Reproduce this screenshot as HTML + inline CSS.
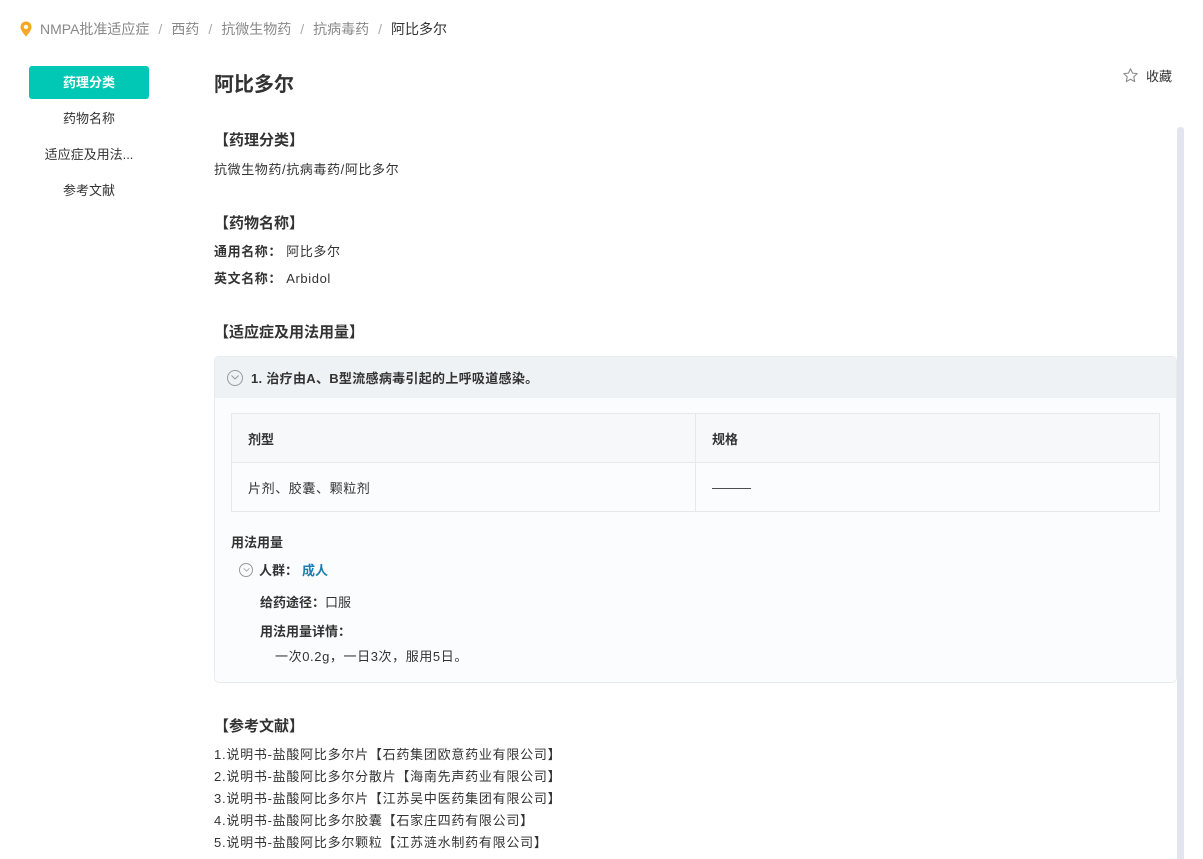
<!DOCTYPE html>
<html><head><meta charset="utf-8">
<style>
*{margin:0;padding:0;box-sizing:border-box}
body{width:1203px;height:859px;overflow:hidden;background:#fff;font-family:"Liberation Sans","Noto Sans CJK SC",sans-serif;color:#333;font-size:13px;position:relative}
.a{position:absolute;white-space:nowrap}
.t{letter-spacing:0.6px}
.bc{top:19px;left:20px;font-size:14px;color:#888;display:flex;align-items:center}
.bc span.s{margin:0 9px;color:#aaa}
.nav{left:29px;width:120px;text-align:center;font-size:13px;color:#333}
h1{font-size:20px;font-weight:bold;color:#333}
.h{font-size:15px;font-weight:bold;color:#333}
.card{left:214px;top:356px;width:963px;height:327px;border:1px solid #e8ebee;border-radius:5px;background:#fbfcfd;overflow:hidden}
.card .hd{height:41px;background:#eef2f4;display:flex;align-items:center;padding-left:12px;font-weight:bold;font-size:13px;color:#333;letter-spacing:0.3px}
.circ{width:16px;height:16px;border:1px solid #999;border-radius:50%;display:inline-flex;align-items:center;justify-content:center;margin-right:8px}
table{position:absolute;left:16px;top:56px;width:929px;border-collapse:collapse;border:1px solid #e6e8eb;font-size:13px}
td{border:1px solid #e6e8eb;height:49px;padding-left:16px}
tr.th td{background:#f6f8f9;font-weight:bold}
.ref{left:214px;font-size:13px;color:#333;letter-spacing:0.75px}
</style></head><body>
<div class="a bc"><svg width="12" height="16" viewBox="0 0 12 16" style="margin-right:8px"><path d="M6 0.5C2.9 0.5 0.5 2.9 0.5 6c0 3.8 5.5 9.5 5.5 9.5S11.5 9.8 11.5 6C11.5 2.9 9.1 0.5 6 0.5z" fill="#f5a623"/><circle cx="6" cy="6" r="2.2" fill="#fff"/></svg>NMPA批准适应症<span class="s">/</span>西药<span class="s">/</span>抗微生物药<span class="s">/</span>抗病毒药<span class="s">/</span><span style="color:#333">阿比多尔</span></div>

<div class="a nav" style="top:66px;height:33px;line-height:33px;background:#00c8b4;color:#fff;font-weight:bold;border-radius:3px">药理分类</div>
<div class="a nav" style="top:108px">药物名称</div>
<div class="a nav" style="top:144px">适应症及用法...</div>
<div class="a nav" style="top:180px">参考文献</div>

<h1 class="a" style="left:214px;top:68px">阿比多尔</h1>
<div class="a" style="left:1122px;top:66px;display:flex;align-items:center;font-size:13px"><svg width="17" height="17" viewBox="0 0 24 24" style="margin-right:7px"><path d="M12 2.5l2.9 6.1 6.6.8-4.9 4.6 1.3 6.6L12 17.3l-5.9 3.3 1.3-6.6-4.9-4.6 6.6-.8z" fill="none" stroke="#888" stroke-width="1.5" stroke-linejoin="round"/></svg>收藏</div>
<div class="a" style="left:1177px;top:127px;width:7px;height:732px;background:#e3e5ee;border-radius:3px 3px 0 0"></div>

<div class="a h" style="left:214px;top:129px">【药理分类】</div>
<div class="a t" style="left:214px;top:159px">抗微生物药/抗病毒药/阿比多尔</div>

<div class="a h" style="left:214px;top:212px">【药物名称】</div>
<div class="a t" style="left:214px;top:241px"><b>通用名称：</b> 阿比多尔</div>
<div class="a t" style="left:214px;top:268px"><b>英文名称：</b> Arbidol</div>

<div class="a h" style="left:214px;top:321px">【适应症及用法用量】</div>
<div class="a card">
 <div class="hd"><span class="circ"><svg width="8" height="5" viewBox="0 0 8 5"><path d="M0.5 0.5L4 4 7.5 0.5" fill="none" stroke="#999" stroke-width="1"/></svg></span>1. 治疗由A、B型流感病毒引起的上呼吸道感染。</div>
 <table><tr class="th"><td style="width:464px">剂型</td><td>规格</td></tr><tr><td class="t">片剂、胶囊、颗粒剂</td><td>———</td></tr></table>
 <div class="a" style="left:16px;top:175px;font-weight:bold">用法用量</div>
 <div class="a" style="left:24px;top:203px;display:flex;align-items:center;font-weight:bold"><span class="circ" style="width:14px;height:14px;margin-right:6px"><svg width="7" height="4" viewBox="0 0 8 5"><path d="M0.5 0.5L4 4 7.5 0.5" fill="none" stroke="#999" stroke-width="1"/></svg></span>人群：<span style="color:#1a7fb0;margin-left:4px">成人</span></div>
 <div class="a" style="left:45px;top:235px"><b>给药途径：</b>口服</div>
 <div class="a" style="left:45px;top:264px;font-weight:bold">用法用量详情：</div>
 <div class="a t" style="left:60px;top:289px">一次0.2g，一日3次，服用5日。</div>
</div>

<div class="a h" style="left:214px;top:715px">【参考文献】</div>
<div class="a ref" style="top:744px">1.说明书-盐酸阿比多尔片【石药集团欧意药业有限公司】</div>
<div class="a ref" style="top:766px">2.说明书-盐酸阿比多尔分散片【海南先声药业有限公司】</div>
<div class="a ref" style="top:788px">3.说明书-盐酸阿比多尔片【江苏吴中医药集团有限公司】</div>
<div class="a ref" style="top:810px">4.说明书-盐酸阿比多尔胶囊【石家庄四药有限公司】</div>
<div class="a ref" style="top:832px">5.说明书-盐酸阿比多尔颗粒【江苏涟水制药有限公司】</div>
</body></html>
